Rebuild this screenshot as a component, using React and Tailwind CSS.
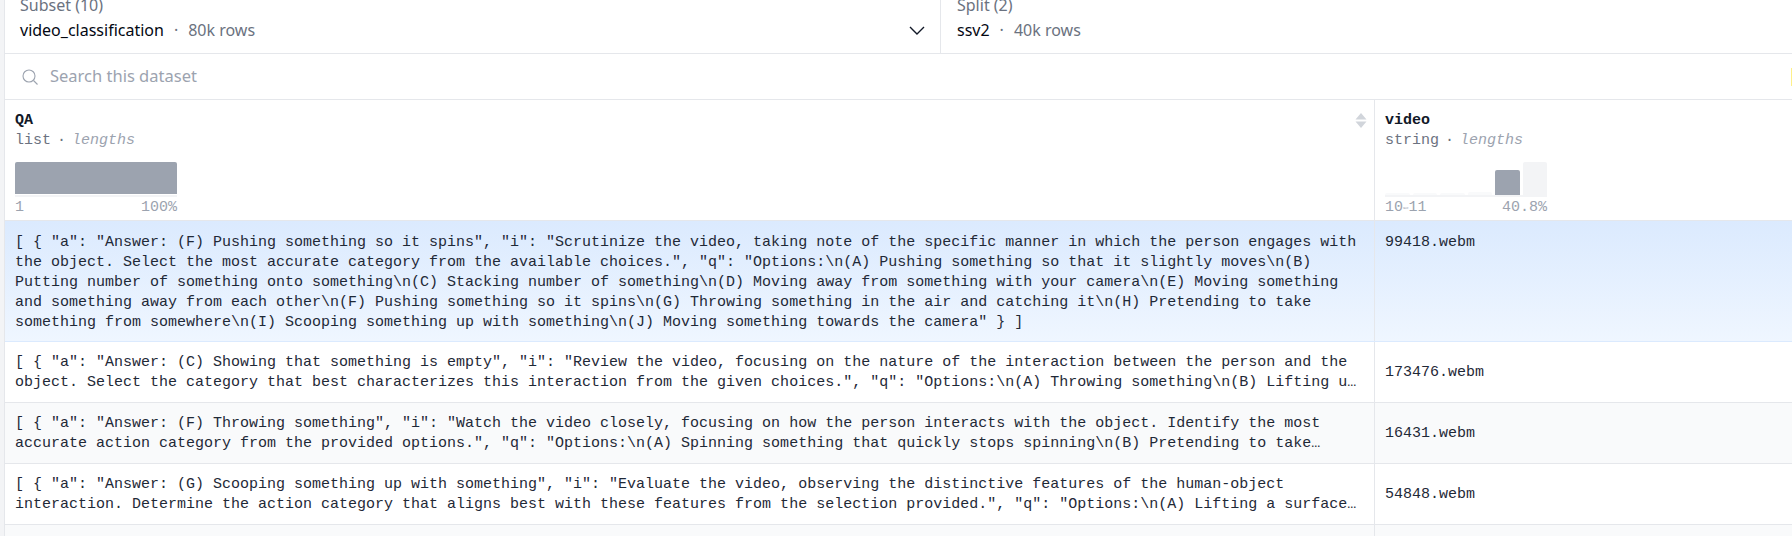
import React from 'react';

const rows = [
  {
    qa: '[ { "a": "Answer: (F) Pushing something so it spins", "i": "Scrutinize the video, taking note of the specific manner in which the person engages with the object. Select the most accurate category from the available choices.", "q": "Options:\\n(A) Pushing something so that it slightly moves\\n(B) Putting number of something onto something\\n(C) Stacking number of something\\n(D) Moving away from something with your camera\\n(E) Moving something and something away from each other\\n(F) Pushing something so it spins\\n(G) Throwing something in the air and catching it\\n(H) Pretending to take something from somewhere\\n(I) Scooping something up with something\\n(J) Moving something towards the camera" } ]',
    video: '99418.webm',
    active: true,
  },
  {
    qa: '[ { "a": "Answer: (C) Showing that something is empty", "i": "Review the video, focusing on the nature of the interaction between the person and the object. Select the category that best characterizes this interaction from the given choices.", "q": "Options:\\n(A) Throwing something\\n(B) Lifting u…',
    video: '173476.webm',
  },
  {
    qa: '[ { "a": "Answer: (F) Throwing something", "i": "Watch the video closely, focusing on how the person interacts with the object. Identify the most accurate action category from the provided options.", "q": "Options:\\n(A) Spinning something that quickly stops spinning\\n(B) Pretending to take…',
    video: '16431.webm',
    alt: true,
  },
  {
    qa: '[ { "a": "Answer: (G) Scooping something up with something", "i": "Evaluate the video, observing the distinctive features of the human-object interaction. Determine the action category that aligns best with these features from the selection provided.", "q": "Options:\\n(A) Lifting a surface…',
    video: '54848.webm',
  },
];

const mono = "font-['Liberation_Mono',monospace]";

const App = () => {
  return (
    <div className="flex h-[536px] w-[1792px] overflow-hidden bg-white font-['Noto_Sans',sans-serif]">
      <div className="w-[5px] shrink-0 border-r border-[#e5e7eb] bg-[#f3f4f6]" />
      <div className="min-w-0 flex-1">
        {/* subset n split */}
        <div className="flex h-[54px] border-b border-[#e5e7eb]">
          <div className="flex w-[936px] items-start justify-between border-r border-[#e5e7eb] pl-[15px] pr-[15px]">
            <div className="-mt-[7px]">
              <div className="text-[16px] leading-[24px] text-[#6b7280]">Subset (10)</div>
              <div className="mt-[1px] flex items-center text-[16px] leading-[24px] text-[#030712]">
                video_classification
                <span className="mx-[10px] text-[#6b7280]">·</span>
                <span className="text-[#6b7280]">80k rows</span>
              </div>
            </div>
            <svg className="mt-[26px]" width="16" height="10" viewBox="0 0 16 10" fill="none" stroke="#111827" strokeWidth="1.4">
              <path d="M1 1l7 7 7-7" />
            </svg>
          </div>
          <div className="-mt-[7px] pl-[16px]">
            <div className="text-[16px] leading-[24px] text-[#6b7280]">Split (2)</div>
            <div className="mt-[1px] flex items-center text-[16px] leading-[24px] text-[#030712]">
              ssv2
              <span className="mx-[10px] text-[#6b7280]">·</span>
              <span className="text-[#6b7280]">40k rows</span>
            </div>
          </div>
        </div>

        {/* search */}
        <div className="flex h-[46px] items-center border-b border-[#e5e7eb] pl-[17px]">
          <svg width="16" height="16" viewBox="0 0 16 16" fill="none" stroke="#9ca3af" strokeWidth="1.1">
            <circle cx="7" cy="7" r="6" />
            <path d="M11.500 11.500l4 4" />
          </svg>
          <span className="ml-[12px] flex-1 text-[16.5px] text-[#9ca3af]">Search this dataset</span>
          <div className="h-[18px] w-[1px] bg-[#fef08a]" />
        </div>

        {/* column headers */}
        <div className="flex h-[121px] border-b border-[#e5e7eb]">
          <div className="relative w-[1370px] border-r border-[#e5e7eb] pl-[10px] pt-[11px]">
            <div className={`text-[15px] font-bold leading-[20px] text-[#111827] ${mono}`}>QA</div>
            <div className={`flex text-[15px] leading-[20px] text-[#6b7280] ${mono}`}>
              list<span className="mx-[6px]">·</span><span className="italic text-[#9ca3af]">lengths</span>
            </div>
            <div className="mt-[11px] h-[35px] w-[162px] border-b-2 border-[#f3f4f6]">
              <div className="h-[32px] rounded-t-[2px] bg-[#9ca3af]" />
            </div>
            <div className={`flex w-[162px] justify-between pt-[1px] text-[15px] leading-[20px] text-[#9ca3af] ${mono}`}>
              <span>1</span>
              <span>100%</span>
            </div>
            <svg className="absolute right-[7px] top-[13px]" width="12" height="15" viewBox="0 0 12 15" fill="#d1d5db">
              <path d="M6 0l5.500 6.500h-11zM6 15l5.500-6.500h-11z" />
            </svg>
          </div>
          <div className="pl-[10px] pt-[11px]">
            <div className={`text-[15px] font-bold leading-[20px] text-[#111827] ${mono}`}>video</div>
            <div className={`flex text-[15px] leading-[20px] text-[#6b7280] ${mono}`}>
              string<span className="mx-[6px]">·</span><span className="italic text-[#9ca3af]">lengths</span>
            </div>
            <div className="mt-[11px] flex h-[35px] w-[162px] items-end gap-[3px] border-b-2 border-[#f3f4f6]">
              <div className="h-[2px] flex-1 rounded-t-[2px] bg-[#f9fafb]" />
              <div className="h-[2px] flex-1 rounded-t-[2px] bg-[#f9fafb]" />
              <div className="h-[2px] flex-1 rounded-t-[2px] bg-[#f9fafb]" />
              <div className="h-[3px] flex-1 rounded-t-[2px] bg-[#f9fafb]" />
              <div className="h-[25px] flex-1 rounded-t-[2px] bg-[#9ca3af]" />
              <div className="h-[33px] flex-1 rounded-t-[2px] bg-[#f3f4f6]" />
            </div>
            <div className={`flex w-[162px] items-center justify-between pt-[1px] text-[15px] leading-[20px] text-[#9ca3af] ${mono}`}>
              <span className="flex items-center">10<span className="text-[9px] text-[#9ca3af]">⇔</span>11</span>
              <span>40.8%</span>
            </div>
          </div>
        </div>

        {/* rows */}
        {rows.map((row) => (
          <div
            key={row.video}
            className={`flex border-b ${mono} text-[15px] leading-[20px] text-[#1f2937] ${
              row.active
                ? 'border-[#dbeafe] bg-gradient-to-b from-[#dbeafe] to-[#eff6ff]'
                : row.alt
                ? 'border-[#e5e7eb] bg-[#f9fafb]'
                : 'border-[#e5e7eb] bg-white'
            }`}
          >
            <div className={`w-[1370px] border-r border-[#e5e7eb] pl-[10px] pr-[16px] ${row.active ? 'pb-[8px] pt-[12px]' : 'pb-[9px] pt-[11px]'}`}>{row.qa}</div>
            <div className={`pl-[10px] ${row.active ? 'pt-[12px]' : 'self-center pt-[2px]'}`}>{row.video}</div>
          </div>
        ))}
        <div className="flex h-[20px] bg-[#f9fafb]">
          <div className="w-[1370px] border-r border-[#e5e7eb]" />
        </div>
      </div>
    </div>
  );
};

export default App;
